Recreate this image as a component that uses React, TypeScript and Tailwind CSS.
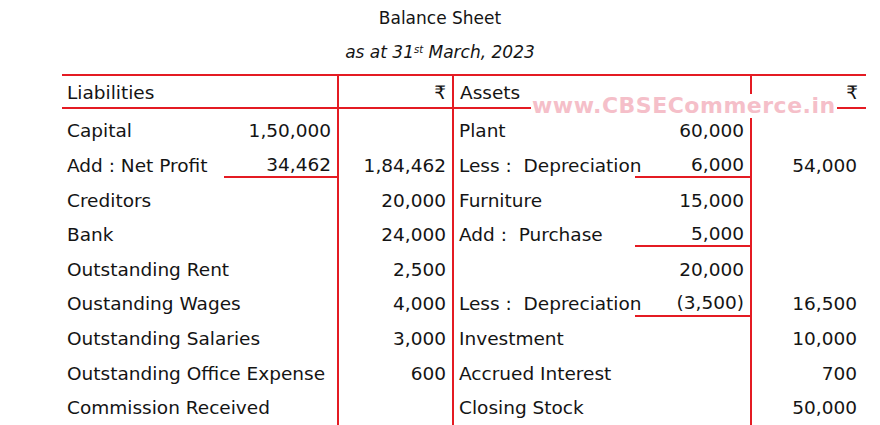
const font = { fontFamily: '"DejaVu Sans", "Noto Sans", sans-serif' };

type Row = {
  label: string;
  inner?: string;
  innerLine?: boolean;
  amount?: string;
};

const liabilities: Row[] = [
  { label: "Capital", inner: "1,50,000" },
  { label: "Add : Net Profit", inner: "34,462", innerLine: true, amount: "1,84,462" },
  { label: "Creditors", amount: "20,000" },
  { label: "Bank", amount: "24,000" },
  { label: "Outstanding Rent", amount: "2,500" },
  { label: "Oustanding Wages", amount: "4,000" },
  { label: "Outstanding Salaries", amount: "3,000" },
  { label: "Outstanding Office Expense", amount: "600" },
  { label: "Commission Received" },
  { label: "" },
];

const assets: Row[] = [
  { label: "Plant", inner: "60,000" },
  { label: "Less :  Depreciation", inner: "6,000", innerLine: true, amount: "54,000" },
  { label: "Furniture", inner: "15,000" },
  { label: "Add :  Purchase", inner: "5,000", innerLine: true },
  { label: "", inner: "20,000" },
  { label: "Less :  Depreciation", inner: "(3,500)", innerLine: true, amount: "16,500" },
  { label: "Investment", amount: "10,000" },
  { label: "Accrued Interest", amount: "700" },
  { label: "Closing Stock", amount: "50,000" },
  { label: "" },
];

function Side({ row, labelW, innerW, amountW, amountPad }: { row: Row; labelW: string; innerW: string; amountW: string; amountPad: string }) {
  return (
    <>
      <div className={`${labelW} flex h-[34.6px] border-r-2 border-[#e41b23]`}>
        <div className="flex-1 min-w-0 flex items-center pt-[10px] pl-[5px] whitespace-pre">{row.label}</div>
        <div className={`${innerW} shrink-0 flex items-center justify-end pt-[10px] pr-[6px] ${row.innerLine ? "border-b-2 border-[#e41b23]" : ""}`}>
          {row.inner}
        </div>
      </div>
      <div className={`${amountW} flex h-[34.6px] items-center pt-[10px] justify-end ${amountPad}`}>{row.amount}</div>
    </>
  );
}

export default function App() {
  return (
    <div className="w-[880px] h-[425px] overflow-hidden bg-white text-[#141414] text-[17px]" style={font}>
      <div className="text-center pt-[7px] leading-[22px]">Balance Sheet</div>
      <div className="text-center italic mt-[12px] leading-[22px]">
        as at 31<sup className="text-[10px]">st</sup> March, 2023
      </div>

      <div className="ml-[62px] w-[804px] mt-[11px] border-t-2 border-[#e41b23] text-[18.5px]">
        {/* Header */}
        <div className="relative flex h-[33px] border-b-2 border-[#e41b23]">
          <div className="w-[277px] flex items-center pt-[2px] pl-[5px] border-r-2 border-[#e41b23]">Liabilities</div>
          <div className="w-[115px] flex items-center pt-[2px] justify-end pr-[6px] border-r-2 border-[#e41b23]">₹</div>
          <div className="w-[298px] flex items-center pt-[2px] pl-[6px] border-r-2 border-[#e41b23]">Assets</div>
          <div className="w-[114px] flex items-center pt-[2px] justify-end pr-[8px]">₹</div>
          <div className="absolute left-[469px] top-[18px] px-[1px] bg-white text-[22px] font-bold leading-[24px] text-[#f5bfc9] tracking-[0.5px]">
            www.CBSECommerce.in
          </div>
        </div>

        {/* Body */}
        <div className="flex">
          <div className="flex flex-col">
            {liabilities.map((r, i) => (
              <div key={i} className="flex">
                <Side row={r} labelW="w-[277px]" innerW="w-[113px]" amountW="w-[115px] border-r-2 border-[#e41b23]" amountPad="pr-[6px]" />
              </div>
            ))}
          </div>
          <div className="flex flex-col">
            {assets.map((r, i) => (
              <div key={i} className="flex">
                <Side row={r} labelW="w-[298px]" innerW="w-[115px]" amountW="w-[114px]" amountPad="pr-[9px]" />
              </div>
            ))}
          </div>
        </div>
      </div>
    </div>
  );
}
